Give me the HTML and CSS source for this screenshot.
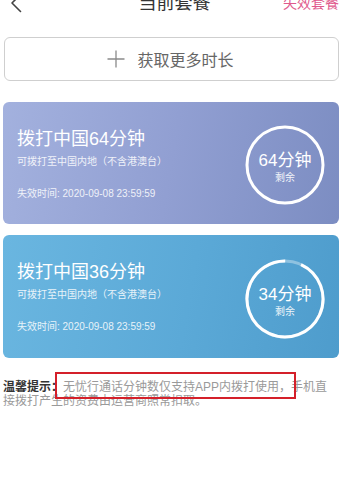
FILE: index.html
```html
<!DOCTYPE html>
<html lang="zh-CN">
<head>
<meta charset="utf-8">
<title>当前套餐</title>
<link rel="stylesheet" href="styles.css">
</head>
<body>
<div class="page">
  <header class="topbar">
    <span class="back">
      <svg width="12" height="20" viewBox="0 0 12 20"><path d="M10.5 1.5 L2 10 L10.5 18.5" fill="none" stroke="#444" stroke-width="1.6" stroke-linecap="round" stroke-linejoin="round"/></svg>
    </span>
    <h1 class="title">当前套餐</h1>
    <a class="expired">失效套餐</a>
  </header>

  <button class="more-btn">
    <svg class="plus" width="18" height="18" viewBox="0 0 18 18"><path d="M9 0.5 V17.5 M0.5 9 H17.5" stroke="#8a8a8a" stroke-width="1.3" fill="none"/></svg>
    <span>获取更多时长</span>
  </button>

  <div class="card card-purple">
    <div class="info">
      <div class="card-title">拨打中国64分钟</div>
      <div class="card-sub">可拨打至中国内地（不含港澳台）</div>
      <div class="card-exp">失效时间: 2020-09-08 23:59:59</div>
    </div>
    <div class="ring">
      <svg class="ring-svg" width="80" height="80" viewBox="0 0 80 80">
        <circle cx="40" cy="40" r="38" fill="none" stroke="#fff" stroke-width="3"/>
      </svg>
      <div class="ring-text">
        <div class="ring-num">64分钟</div>
        <div class="ring-label">剩余</div>
      </div>
    </div>
  </div>

  <div class="card card-blue">
    <div class="info">
      <div class="card-title">拨打中国36分钟</div>
      <div class="card-sub">可拨打至中国内地（不含港澳台）</div>
      <div class="card-exp">失效时间: 2020-09-08 23:59:59</div>
    </div>
    <div class="ring">
      <svg class="ring-svg" width="80" height="80" viewBox="0 0 80 80">
        <circle cx="40" cy="40" r="38" fill="none" stroke="rgba(255,255,255,0.35)" stroke-width="3"/>
        <circle cx="40" cy="40" r="38" fill="none" stroke="#fff" stroke-width="3" stroke-dasharray="222 238.8" transform="rotate(-65 40 40)"/>
      </svg>
      <div class="ring-text">
        <div class="ring-num">34分钟</div>
        <div class="ring-label">剩余</div>
      </div>
    </div>
  </div>

  <p class="notice"><b>温馨提示：</b>无忧行通话分钟数仅支持APP内拨打使用，手机直接拨打产生的资费由运营商照常扣取。<span class="mark"></span></p>
</div>
</body>
</html>
```

FILE: styles.css
```css
* { box-sizing: border-box; }
html, body {
  margin: 0;
  padding: 0;
  background: #fff;
}
body {
  font-family: "Liberation Sans", "Noto Sans CJK SC", sans-serif;
  color: #333;
  width: 352px;
  height: 485px;
  overflow: hidden;
}
.page {
  display: flex;
  flex-direction: column;
}
.topbar {
  display: grid;
  grid-template-columns: 1fr auto 1fr;
  align-items: center;
  height: 30px;
  margin-top: -12px;
  padding: 0 13px 0 10px;
}
.back {
  display: flex;
  align-items: center;
}
.title {
  margin: 0;
  font-size: 18px;
  font-weight: normal;
  line-height: 30px;
  color: #333;
}
.expired {
  justify-self: end;
  font-size: 14px;
  line-height: 30px;
  color: #e0598d;
}
.more-btn {
  margin: 19px 0 0 4px;
  width: 335px;
  height: 44px;
  border: 1px solid #cfcfcf;
  border-radius: 6px;
  background: #fff;
  display: flex;
  align-items: center;
  justify-content: center;
  gap: 12px;
  font-family: inherit;
  font-size: 16px;
  color: #666;
  padding: 0 2px 0 0;
}
.card {
  margin-left: 3px;
  width: 336px;
  height: 122px;
  border-radius: 6px;
  padding-left: 14px;
  padding-right: 14px;
  display: flex;
  justify-content: space-between;
  align-items: center;
  color: #fff;
}
.card-purple {
  margin-top: 21px;
  background: linear-gradient(100deg, #a3b1de 0%, #919fd2 50%, #7c8dc2 100%);
}
.card-blue {
  margin-top: 11px;
  height: 123px;
  background: linear-gradient(100deg, #6ab6e0 0%, #5ba9d7 55%, #4e9ccc 100%);
}
.info {
  align-self: flex-start;
  padding-top: 26px;
  display: flex;
  flex-direction: column;
}
.card-title {
  font-size: 18px;
  line-height: 22px;
}
.card-sub {
  margin-top: 5px;
  font-size: 10px;
  line-height: 14px;
  opacity: 0.85;
}
.card-exp {
  margin-top: 18px;
  font-size: 10px;
  line-height: 14px;
  opacity: 0.85;
}
.ring {
  position: relative;
  width: 80px;
  height: 80px;
  margin-top: 4px;
}
.ring-svg {
  position: absolute;
  left: 0;
  top: 0;
}
.ring-text {
  position: relative;
  height: 80px;
  display: flex;
  flex-direction: column;
  align-items: center;
  justify-content: center;
  padding-top: 6px;
}
.ring-num {
  font-size: 17px;
  line-height: 20px;
}
.ring-label {
  font-size: 10px;
  line-height: 14px;
  opacity: 0.9;
}
.notice {
  position: relative;
  margin: 22px 0 0 0;
  padding: 0 16px 0 3px;
  font-size: 12px;
  line-height: 14px;
  color: #9a9a9a;
}
.notice b {
  color: #333;
  font-weight: bold;
}
.mark {
  position: absolute;
  left: 55px;
  top: -8px;
  width: 241px;
  height: 27px;
  border: 2px solid #d4202a;
}
```
